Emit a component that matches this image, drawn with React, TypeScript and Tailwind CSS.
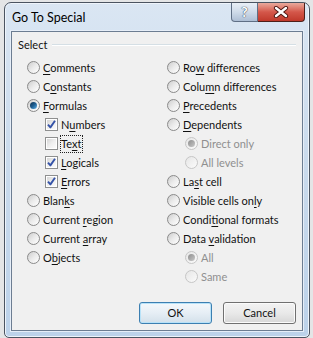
import React from "react"

type Item = {
    kind: "radio" | "check"
    label: string
    key: number
    checked?: boolean
    disabled?: boolean
    indent?: boolean
    focus?: boolean
}

const leftItems: Item[] = [
    { kind: "radio", label: "Comments", key: 0 },
    { kind: "radio", label: "Constants", key: 1 },
    { kind: "radio", label: "Formulas", key: 0, checked: true },
    { kind: "check", label: "Numbers", key: 1, checked: true, indent: true },
    { kind: "check", label: "Text", key: 2, indent: true, focus: true },
    { kind: "check", label: "Logicals", key: 0, checked: true, indent: true },
    { kind: "check", label: "Errors", key: 0, checked: true, indent: true },
    { kind: "radio", label: "Blanks", key: 4 },
    { kind: "radio", label: "Current region", key: 8 },
    { kind: "radio", label: "Current array", key: 8 },
    { kind: "radio", label: "Objects", key: 1 },
]

const rightItems: Item[] = [
    { kind: "radio", label: "Row differences", key: 2 },
    { kind: "radio", label: "Column differences", key: 4 },
    { kind: "radio", label: "Precedents", key: 0 },
    { kind: "radio", label: "Dependents", key: 0 },
    { kind: "radio", label: "Direct only", key: -1, checked: true, disabled: true, indent: true },
    { kind: "radio", label: "All levels", key: -1, disabled: true, indent: true },
    { kind: "radio", label: "Last cell", key: 2 },
    { kind: "radio", label: "Visible cells only", key: 16 },
    { kind: "radio", label: "Conditional formats", key: 5 },
    { kind: "radio", label: "Data validation", key: 5 },
    { kind: "radio", label: "All", key: -1, checked: true, disabled: true, indent: true },
    { kind: "radio", label: "Same", key: -1, disabled: true, indent: true },
]

function Radio({ checked, disabled }: { checked?: boolean; disabled?: boolean }) {
    return (
        <div
            className={
                "w-[13px] h-[13px] rounded-full border flex items-center justify-center shrink-0 " +
                (disabled
                    ? "border-[#c6c6c6] bg-gradient-to-br from-[#e6e6e6] to-[#fbfbfb]"
                    : "border-[#8a8a8a] bg-gradient-to-br from-[#cdcdcd] via-[#ebebeb] to-[#ffffff]")
            }
        >
            {checked && (
                <div
                    className={
                        "w-[7px] h-[7px] rounded-full " +
                        (disabled
                            ? "bg-gradient-to-br from-[#8e8e8e] to-[#c8c8c8]"
                            : "bg-gradient-to-br from-[#0d2f4d] via-[#1f5f93] to-[#5fb3ea]")
                    }
                />
            )}
        </div>
    )
}

function Check({ checked }: { checked?: boolean }) {
    return (
        <div className="w-[13px] h-[13px] border border-[#8e8f8f] bg-white p-[1px] shrink-0">
            <div className="w-full h-full bg-gradient-to-br from-[#d6d6d6] via-[#eeeeee] to-[#fbfbfb] flex items-center justify-center">
                {checked && (
                    <svg width="9" height="9" viewBox="0 0 9 9">
                        <path d="M1 4.6 L3.4 7.4 L8 0.8" fill="none" stroke="#3553a8" strokeWidth="1.9" strokeLinejoin="round" />
                    </svg>
                )}
            </div>
        </div>
    )
}

function Label({ text, k }: { text: string; k: number }) {
    if (k < 0) return <>{text}</>
    return (
        <>
            {text.slice(0, k)}
            <span className="underline underline-offset-[2px]">{text[k]}</span>
            {text.slice(k + 1)}
        </>
    )
}

function Row({ item }: { item: Item }) {
    return (
        <div className={"h-[19px] flex items-center " + (item.indent ? "pl-[18px]" : "")}>
            {item.kind === "radio" ? <Radio checked={item.checked} disabled={item.disabled} /> : <Check checked={item.checked} />}
            <span
                className={
                    "leading-[16px] whitespace-nowrap " +
                    (item.kind === "check" ? "ml-[2px] pr-[1px] " : "ml-[1px] px-[1px] ") +
                    (item.focus ? "border border-dotted border-[#222] " : "border border-transparent ") +
                    (item.disabled ? "text-[#8f8f8f]" : "text-[#111]")
                }
            >
                <Label text={item.label} k={item.key} />
            </span>
        </div>
    )
}

function DlgButton({ children, def }: { children: React.ReactNode; def?: boolean }) {
    return (
        <div
            className={
                "w-[73px] h-[22px] rounded-[3px] border flex items-center justify-center text-[#111] " +
                (def
                    ? "border-[#3c7fb1] shadow-[inset_0_0_0_1px_#b8e2f8] bg-gradient-to-b from-[#f4f8fb] via-[#e6eef5] to-[#d3e0ea]"
                    : "border-[#707070] shadow-[inset_0_0_0_1px_#fbfbfb] bg-gradient-to-b from-[#f3f3f3] via-[#e9e9e9] to-[#d7d7d7]")
            }
        >
            {children}
        </div>
    )
}

export default function App() {
    return (
        <div className="w-[313px] h-[338px] bg-[#e4e5e6] pl-[4px] pt-[2px] overflow-hidden font-['Lato','Noto_Sans',sans-serif] text-[11px]">
            <div className="w-[306px] h-[336px] rounded-t-[7px] rounded-b-[5px] border border-[#4b5461] bg-gradient-to-b from-[#dae6f3] via-[#c9daec] to-[#bcd2ea] shadow-[inset_0_0_0_1px_#eef4fb] flex flex-col">
                {/* title bar */}
                <div className="h-[28px] flex items-start">
                    <div className="pl-[7px] pt-[6px] text-[12.5px] text-black leading-[18px]">Go To Special</div>
                    <div className="ml-auto mr-[4px] flex">
                        <div className="w-[27px] h-[19px] rounded-bl-[4px] border border-t-0 border-[#5f6f85] bg-gradient-to-b from-[#e9eff6] via-[#cfdbe9] to-[#aebfd5] flex items-center justify-center">
                            <span className="text-[14px] font-bold leading-none text-white [text-shadow:0_0_1px_#2d3b4f,0_0_1px_#2d3b4f]">?</span>
                        </div>
                        <div className="w-[47px] h-[19px] rounded-br-[4px] border border-l-0 border-t-0 border-[#4d1f1a] bg-gradient-to-b from-[#e9a99c] via-[#d4574a] to-[#c0392b] flex items-center justify-center">
                            <svg width="16" height="12" viewBox="0 0 16 12">
                                <path d="M3 2 L13 10 M13 2 L3 10" stroke="#4a1410" strokeWidth="4.2" strokeLinecap="round" />
                                <path d="M3 2 L13 10 M13 2 L3 10" stroke="#ffffff" strokeWidth="2.4" strokeLinecap="round" />
                            </svg>
                        </div>
                    </div>
                </div>

                {/* client area */}
                <div className="mx-[6px] h-[300px] border border-[#6c7d92] bg-[#f0f0f0] flex flex-col shadow-[0_0_0_1px_#e6eef8]">
                    <div className="mt-[6px] mx-[5px] h-[14px] flex items-center">
                        <span className="px-[1px] text-[#111] leading-[14px]">Select</span>
                        <div className="flex-1 ml-[4px] mr-[1px] h-[2px] border-t border-[#d5dfe5] border-b border-b-white" />
                    </div>
                    <div className="mt-[6px] pl-[15px] flex">
                        <div className="w-[140px] flex flex-col">
                            {leftItems.map((it) => (
                                <Row key={it.label} item={it} />
                            ))}
                        </div>
                        <div className="flex flex-col">
                            {rightItems.map((it) => (
                                <Row key={it.label} item={it} />
                            ))}
                        </div>
                    </div>
                    <div className="mt-auto mb-[6px] mr-[6px] flex justify-end gap-[11px]">
                        <DlgButton def>OK</DlgButton>
                        <DlgButton>Cancel</DlgButton>
                    </div>
                </div>
            </div>
        </div>
    )
}
